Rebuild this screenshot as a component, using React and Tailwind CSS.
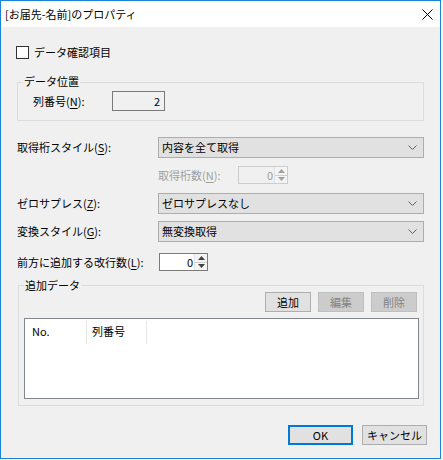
import React from 'react';

const font = { fontFamily: '"Noto Sans CJK JP", "Noto Sans", sans-serif' };

function Key({ children }) {
    return <span className="underline underline-offset-2">{children}</span>;
}

function Chevron() {
    return (
        <svg width="9" height="6" viewBox="0 0 9 6" className="shrink-0">
            <path d="M0.5 0.5 L4.5 4.5 L8.5 0.5" fill="none" stroke="#606060" strokeWidth="1" />
        </svg>
    );
}

function Combo({ value }) {
    return (
        <div className="flex-1 h-[21px] border border-[#adadad] bg-[#e1e1e1] flex items-center justify-between pl-[3px] pr-[6px]">
            <span className="leading-none">{value}</span>
            <Chevron />
        </div>
    );
}

function Spinner({ value, width, disabled }) {
    const arrow = disabled ? '#a0a0a0' : '#404040';
    return (
        <div
            className={
                'h-[18px] border flex items-stretch ' +
                (disabled ? 'border-[#cccccc] bg-[#f0f0f0] text-[#a0a0a0]' : 'border-[#7a7a7a] bg-white text-black')
            }
            style={{ width }}
        >
            <div className="flex-1 flex items-center justify-end pr-[1px] leading-none">{value}</div>
            <div className="w-[13px] flex flex-col border-l border-[#e3e3e3]">
                <div className="flex-1 flex items-center justify-center bg-[#f4f4f4] border-b border-[#d0d0d0]">
                    <svg width="7" height="4" viewBox="0 0 7 4">
                        <path d="M0 4 L3.5 0 L7 4 Z" fill={arrow} />
                    </svg>
                </div>
                <div className="flex-1 flex items-center justify-center bg-[#f4f4f4]">
                    <svg width="7" height="4" viewBox="0 0 7 4">
                        <path d="M0 0 L3.5 4 L7 0 Z" fill={arrow} />
                    </svg>
                </div>
            </div>
        </div>
    );
}

function Btn({ children, disabled, primary, className = '' }) {
    let cls = 'flex items-center justify-center leading-none ';
    if (primary) cls += 'border-2 border-[#0078d7] bg-[#e1e1e1] text-black';
    else if (disabled) cls += 'border border-[#bfbfbf] bg-[#cccccc] text-[#838383]';
    else cls += 'border border-[#adadad] bg-[#e1e1e1] text-black';
    return <div className={cls + ' ' + className}>{children}</div>;
}

export default function App() {
    return (
        <div
            className="w-[441px] h-[459px] border border-[#1883d7] bg-[#f0f0f0] flex flex-col text-[11px] text-black overflow-hidden"
            style={font}
        >
            {/* title bar */}
            <div className="h-[26px] shrink-0 bg-white flex items-center justify-between pl-[4px] pr-[7px]">
                <span className="text-[11px] leading-none">[お届先-名前]のプロパティ</span>
                <svg width="11" height="11" viewBox="0 0 11 11">
                    <path d="M0.5 0.5 L10.5 10.5 M10.5 0.5 L0.5 10.5" stroke="#000" strokeWidth="1" />
                </svg>
            </div>

            <div className="flex flex-col pl-[16px] pr-[16px]">
                {/* checkbox */}
                <div className="mt-[19px] flex items-center gap-[5px] ml-[-1px] h-[13px]">
                    <div className="w-[13px] h-[13px] border border-[#333333] bg-white" />
                    <span className="leading-none">データ確認項目</span>
                </div>

                {/* データ位置 */}
                <div className="mt-[23px] h-[39px] border border-[#dcdcdc] relative pt-[8px] pl-[15px]">
                    <span className="absolute left-[5px] top-[-9px] px-[1px] bg-[#f0f0f0] leading-[14px]">データ位置</span>
                    <div className="flex items-center">
                        <span className="w-[79px] leading-none">
                            列番号(<Key>N</Key>):
                        </span>
                        <div className="w-[53px] h-[20px] border border-[#7a7a7a] bg-[#f0f0f0] flex items-center justify-end pr-[4px] leading-none">
                            2
                        </div>
                    </div>
                </div>

                <div className="mt-[16px] flex items-center">
                    <span className="w-[141px] leading-none">
                        取得桁スタイル(<Key>S</Key>):
                    </span>
                    <Combo value="内容を全て取得" />
                </div>

                <div className="mt-[8px] flex items-center ml-[141px]">
                    <span className="w-[80px] leading-none text-[#a0a0a0]">
                        取得桁数(<Key>N</Key>):
                    </span>
                    <Spinner value="0" width={50} disabled />
                </div>

                <div className="mt-[9px] flex items-center">
                    <span className="w-[141px] leading-none">
                        ゼロサプレス(<Key>Z</Key>):
                    </span>
                    <Combo value="ゼロサプレスなし" />
                </div>

                <div className="mt-[7px] flex items-center">
                    <span className="w-[141px] leading-none">
                        変換スタイル(<Key>G</Key>):
                    </span>
                    <Combo value="無変換取得" />
                </div>

                <div className="mt-[11px] flex items-center">
                    <span className="w-[142px] leading-none">
                        前方に追加する改行数(<Key>L</Key>):
                    </span>
                    <Spinner value="0" width={49} />
                </div>

                {/* 追加データ */}
                <div className="mt-[14px] ml-[1px] h-[121px] border border-[#dcdcdc] relative flex flex-col pt-[6px] pl-[5px] pr-[4px]">
                    <span className="absolute left-[5px] top-[-8px] px-[1px] bg-[#f0f0f0] leading-[14px]">追加データ</span>
                    <div className="flex justify-end gap-[7px] mr-[2px]">
                        <Btn className="w-[46px] h-[20px]">追加</Btn>
                        <Btn className="w-[46px] h-[20px]" disabled>編集</Btn>
                        <Btn className="w-[46px] h-[20px]" disabled>削除</Btn>
                    </div>
                    <div className="mt-[6px] h-[81px] border border-[#828790] bg-white">
                        <div className="h-[25px] flex">
                            <div className="w-[61px] flex items-center pl-[7px] leading-none">No.</div>
                            <div className="w-px mt-[2px] bg-[#e5e5e5]" />
                            <div className="w-[59px] flex items-center pl-[5px] leading-none">列番号</div>
                            <div className="w-px mt-[2px] bg-[#e5e5e5]" />
                        </div>
                    </div>
                </div>

                {/* footer */}
                <div className="mt-[19px] flex justify-end gap-[9px] mr-[-3px]">
                    <Btn className="w-[65px] h-[20px]" primary>OK</Btn>
                    <Btn className="w-[65px] h-[20px]">キャンセル</Btn>
                </div>
            </div>
        </div>
    );
}
